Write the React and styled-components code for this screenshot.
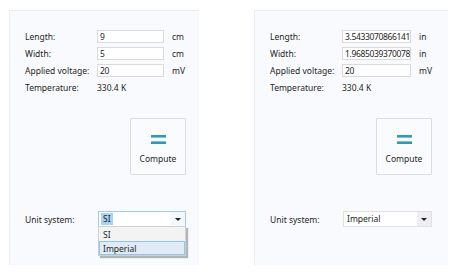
import styled, { createGlobalStyle } from 'styled-components'

const GlobalStyle = createGlobalStyle`
  html, body {
    margin: 0;
    padding: 0;
    background: #ffffff;
  }
  body {
    font-family: 'Noto Sans', 'Open Sans', sans-serif;
    font-size: 8.5px;
    color: #1e1e1e;
  }
`

const Page = styled.div`
  display: flex;
  width: 459px;
  height: 275px;
  padding: 10px 0 0 9px;
  box-sizing: border-box;
  gap: 55px;
`

const Panel = styled.div`
  display: flex;
  flex-direction: column;
  width: ${(p) => p.$width}px;
  height: 255px;
  box-sizing: border-box;
  padding: 19px 0 0 15px;
  background: #f9fafd;
  border-top: 1px solid #eceef3;
  border-left: 1px solid #eceef3;
`

const Content = styled.div`
  display: flex;
  flex-direction: column;
  width: ${(p) => p.$width}px;
`

const Form = styled.div`
  display: grid;
  grid-template-columns: 72px ${(p) => p.$input}px auto;
  grid-auto-rows: 13px;
  row-gap: 4px;
  align-items: center;
`

const Label = styled.span`
  white-space: nowrap;
  line-height: 13px;
`

const Field = styled.div`
  height: 13px;
  box-sizing: border-box;
  border: 1px solid #d9dadc;
  background: #ffffff;
  padding: 0 2px;
  line-height: 11px;
  letter-spacing: -0.35px;
  white-space: nowrap;
  overflow: hidden;
`

const Unit = styled.span`
  padding-left: 8px;
  line-height: 13px;
`

const Value = styled.span`
  margin-top: 0;
  line-height: 13px;
`

const ComputeButton = styled.button`
  align-self: flex-end;
  margin-top: 24px;
  width: 56px;
  height: 57px;
  display: flex;
  flex-direction: column;
  align-items: center;
  justify-content: center;
  gap: 8px;
  padding: 6px 0 0;
  background: #fafbfd;
  border: 1px solid #dcdde0;
  border-radius: 1px;
  font-family: inherit;
  font-size: 8.5px;
  color: #1e1e1e;
`

const SelectRow = styled.div`
  display: flex;
  align-items: center;
  margin-top: 36px;
`

const SelectLabel = styled.span`
  width: 73px;
  line-height: 15px;
`

const SelectWrap = styled.div`
  position: relative;
  flex: 1;
`

const SelectBox = styled.div`
  display: flex;
  height: 16px;
  box-sizing: border-box;
  border: 1px solid ${(p) => (p.$focused ? '#9cccef' : '#e0e1e4')};
  background: #ffffff;
`

const SelectText = styled.span`
  flex: 1;
  padding-left: ${(p) => (p.$focused ? 2 : 3)}px;
  line-height: 14px;
  display: flex;
  align-items: center;
`

const Highlight = styled.span`
  background: #a9d3f5;
  padding: 0 2px;
  line-height: 12px;
`

const Arrow = styled.span`
  width: 14px;
  display: flex;
  align-items: center;
  justify-content: center;
  background: ${(p) => (p.$focused ? '#f2f8fd' : '#efeff1')};

  &::after {
    content: '';
    border-left: 3px solid transparent;
    border-right: 3px solid transparent;
    border-top: 3px solid #222;
  }
`

const Menu = styled.div`
  position: absolute;
  left: 0;
  right: 0;
  top: 15px;
  background: #f3f3f3;
  border: 1px solid #cfd0d2;
  box-shadow: 2px 2px 1px rgba(0, 0, 0, 0.28);
`

const MenuItem = styled.div`
  height: 14px;
  line-height: 14px;
  padding-left: 3px;
  box-sizing: border-box;
  background: ${(p) => (p.$active ? '#dfebf7' : 'transparent')};
  border: 1px solid ${(p) => (p.$active ? '#92c3ea' : 'transparent')};
`

function EqualsIcon() {
  return (
    <svg width="15" height="10" viewBox="0 0 15 10">
      <rect x="0" y="0" width="15" height="2.6" fill="#2a9cb8" />
      <rect x="0" y="6.4" width="15" height="2.6" fill="#2a9cb8" />
    </svg>
  )
}

function Calculator({ width, contentWidth, input, length, widthValue, lengthUnit, unitSystem, open }) {
  return (
    <Panel $width={width}>
      <Content $width={contentWidth}>
        <Form $input={input}>
          <Label>Length:</Label>
          <Field>{length}</Field>
          <Unit>{lengthUnit}</Unit>
          <Label>Width:</Label>
          <Field>{widthValue}</Field>
          <Unit>{lengthUnit}</Unit>
          <Label>Applied voltage:</Label>
          <Field>20</Field>
          <Unit>mV</Unit>
          <Label as={Value}>Temperature:</Label>
          <Value>330.4 K</Value>
        </Form>
        <ComputeButton>
          <EqualsIcon />
          Compute
        </ComputeButton>
        <SelectRow>
          <SelectLabel>Unit system:</SelectLabel>
          <SelectWrap>
            <SelectBox $focused={open}>
              <SelectText $focused={open}>
                {open ? <Highlight>{unitSystem}</Highlight> : unitSystem}
              </SelectText>
              <Arrow $focused={open} />
            </SelectBox>
            {open && (
              <Menu>
                <MenuItem>SI</MenuItem>
                <MenuItem $active>Imperial</MenuItem>
              </Menu>
            )}
          </SelectWrap>
        </SelectRow>
      </Content>
    </Panel>
  )
}

export default function App() {
  return (
    <>
      <GlobalStyle />
      <Page>
        <Calculator
          width={190}
          contentWidth={161}
          input={67}
          length="9"
          widthValue="5"
          lengthUnit="cm"
          unitSystem="SI"
          open
        />
        <Calculator
          width={194}
          contentWidth={162}
          input={69}
          length="3.5433070866141"
          widthValue="1.9685039370078"
          lengthUnit="in"
          unitSystem="Imperial"
        />
      </Page>
    </>
  )
}
